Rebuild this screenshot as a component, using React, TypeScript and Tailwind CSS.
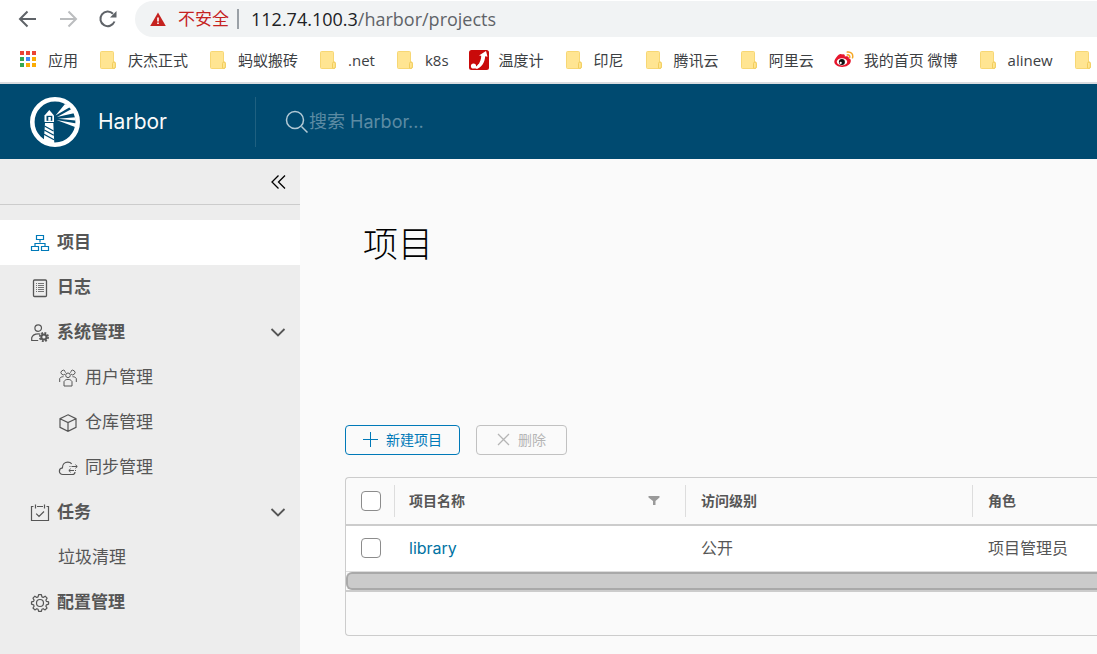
import type { ReactNode } from "react";

type IconName =
  | "projects"
  | "logs"
  | "admin"
  | "users"
  | "registry"
  | "replication"
  | "tasks"
  | "settings";

interface NavItem {
  title: string;
  icon?: IconName;
  child?: boolean;
  active?: boolean;
  expandable?: boolean;
}

const bookmarks = [
  { title: "应用", icon: "apps" },
  { title: "庆杰正式", icon: "folder" },
  { title: "蚂蚁搬砖", icon: "folder" },
  { title: ".net", icon: "folder" },
  { title: "k8s", icon: "folder" },
  { title: "温度计", icon: "thermo" },
  { title: "印尼", icon: "folder" },
  { title: "腾讯云", icon: "folder" },
  { title: "阿里云", icon: "folder" },
  { title: "我的首页 微博", icon: "weibo" },
  { title: "alinew", icon: "folder" },
  { title: "", icon: "folder" },
];

const navItems: NavItem[] = [
  { title: "项目", icon: "projects", active: true },
  { title: "日志", icon: "logs" },
  { title: "系统管理", icon: "admin", expandable: true },
  { title: "用户管理", icon: "users", child: true },
  { title: "仓库管理", icon: "registry", child: true },
  { title: "同步管理", icon: "replication", child: true },
  { title: "任务", icon: "tasks", expandable: true },
  { title: "垃圾清理", child: true },
  { title: "配置管理", icon: "settings" },
];

const projects = [{ name: "library", access: "公开", role: "项目管理员" }];

function BookmarkIcon({ icon }: { icon: string }) {
  if (icon === "apps") {
    const colors = [
      "#ea4335", "#ea4335", "#ea4335",
      "#34a853", "#4285f4", "#fbac05",
      "#34a853", "#fbac05", "#fbac05",
    ];
    return (
      <svg width="20" height="20" viewBox="0 0 20 20" className="shrink-0">
        {colors.map((color, i) => (
          <rect
            key={i}
            x={2 + (i % 3) * 6}
            y={1 + Math.floor(i / 3) * 6}
            width="4"
            height="4"
            fill={color}
          />
        ))}
      </svg>
    );
  }
  if (icon === "thermo") {
    return (
      <svg width="20" height="20" viewBox="0 0 20 20" className="shrink-0">
        <rect width="20" height="20" rx="2.5" fill="#c90a0a" />
        <path
          d="M17 1 10 5.500l2.200.3c.2 3-1.400 7.200-3.400 9.500l-1.300 3.400c5-.8 8.300-6 8.700-12.400l2.300.5z"
          fill="#fff"
        />
        <path d="M9.500 14c-1 1.600-2.300 2.500-3.600 2.800l.6 2c1.700.1 3.300-.9 4.500-2.300z" fill="#fff" />
        <circle cx="4.500" cy="16" r="2.600" fill="#fff" />
      </svg>
    );
  }
  if (icon === "weibo") {
    return (
      <svg width="20" height="20" viewBox="0 0 20 20" className="shrink-0">
        <path
          d="M8 4.500c1.600-.8 3.300-.3 2.800 2.100 2.700-.9 4.500-.2 3.900 1.700 2 .6 2.400 1.800 2 3.400-.8 3.300-4.700 5.300-8.700 5.200C3.500 16.800.3 14.600.3 11.800.3 9 5 3.400 7 4.100c.5.1.8.3 1 .4z"
          fill="#e6162d"
        />
        <ellipse cx="8" cy="11.800" rx="5.200" ry="3.600" fill="#fff" />
        <circle cx="7.900" cy="12" r="3" fill="#111" />
        <circle cx="6.700" cy="12.900" r="1.100" fill="#fff" />
        <path
          d="M13.300 2c3.500-.6 6.300 2.200 5.200 5.800M13.300 4.900c1.700-.3 2.900 1 2.400 2.600"
          fill="none"
          stroke="#f5a623"
          strokeWidth="1.500"
          strokeLinecap="round"
        />
      </svg>
    );
  }
  return (
    <svg width="20" height="20" viewBox="0 0 20 20" className="shrink-0">
      <path
        d="M3.500 1.500h11a1 1 0 0 1 1 1v9.500h.8a1 1 0 0 1 1 1v4a1.500 1.500 0 0 1-1.500 1.500H3.500a1 1 0 0 1-1-1v-15a1 1 0 0 1 1-1z"
        fill="#ffe592"
        stroke="#f7d774"
      />
      <path
        d="M14.500 18v-4.500a1.400 1.400 0 0 1 2.800 0V17a1.400 1.400 0 0 1-1.400 1.400z"
        fill="#ffe592"
        stroke="#f2cd5c"
      />
    </svg>
  );
}

const navIcons: Record<IconName, ReactNode> = {
  projects: (
    <path
      d="M5.500 1.500h7v4h-7zM.5 12.500h7v4h-7zM10.500 12.500h7v4h-7zM9 5.500v3M4 12.500v-3h10v3"
      strokeWidth="1.200"
    />
  ),
  logs: (
    <>
      <rect x="2.500" y="1" width="13" height="16.500" rx="1" strokeWidth="1.300" />
      <path
        d="M5 4.500h1M7 4.500h6M5 6.500h1M7 6.500h6M5 8.500h1M7 8.500h6M5 10.500h1M7 10.500h6M5 12.500h1M7 12.500h6"
        strokeWidth=".8"
      />
    </>
  ),
  admin: (
    <>
      <circle cx="7.200" cy="4.100" r="3.300" strokeWidth="1.200" />
      <path d="M7.200 16.500H.7v-2.700c.8-2.600 3.400-4 6.500-4 .8 0 1.500.1 2.100.3" strokeWidth="1.200" />
      <circle cx="12.900" cy="13" r="2.600" strokeWidth="2" />
      <circle cx="12.900" cy="13" r="4.200" strokeWidth="1.700" strokeDasharray="1.900 1.400" />
    </>
  ),
  users: (
    <>
      <circle cx="9" cy="6.300" r="2.300" />
      <path d="M5 17V12.600c.8-1.600 2.300-2.200 4-2.200s3.200.6 4 2.200V17zM5.900 5.200A2.300 2.300 0 1 1 6 2M12.100 5.200A2.300 2.300 0 1 0 12 2M.7 13V9.500C1.300 8.300 2.700 7.700 4.500 7.700M17.300 13V9.500c-.6-1.200-2-1.800-3.800-1.800M5.500 2.200l1.600 1.500M12.500 2.200l-1.600 1.500" />
    </>
  ),
  registry: (
    <path
      d="M9 .8 17 4.600v8.700l-8 4-8-4V4.600zM1 4.800l8 3.800 8-3.800M9 8.600v8.700"
      strokeWidth="1.200"
    />
  ),
  replication: (
    <>
      <path
        d="M16 13c0 1.700-1.200 2.500-2.800 2.500H3.800C1.900 15.500.4 14.200.4 12.200c0-1.800 1.200-3.100 3-3.300C3.400 5.500 5.700 3.200 8.800 3.200c1.600 0 3 .6 3.900 1.600"
        strokeWidth="1.200"
      />
      <path d="M10.500 7.500h1M12.500 7.500H18M16.400 5.700 18.300 7.500l-1.900 1.800M17 11.500h-1M15 11.500h-5M11.700 9.700 9.800 11.500l1.900 1.800" />
    </>
  ),
  tasks: (
    <path
      d="M2.500 2.500h-2v14h17v-14h-2M6 2.500h6M4.500.5v4M13.500.5v4M5.200 9.700 8 12.500l5-5"
      strokeWidth="1.200"
    />
  ),
  settings: (
    <>
      <circle cx="9" cy="9" r="3.500" strokeWidth="1.200" />
      <path
        d="M7.600.7h2.800l.5 2.200 1.300.5 1.900-1.200 2 2-1.200 1.900.5 1.300 2.200.5v2.300l-2.200.6-.5 1.300 1.100 1.900-1.900 1.900-1.900-1.200-1.300.6-.5 2.100H7.600l-.5-2.100-1.300-.6-1.900 1.200L2 14l1.100-1.900-.5-1.300-2.100-.6V7.900l2.100-.5.5-1.300L2 4.200l1.900-2 1.900 1.200 1.300-.5z"
        strokeWidth="1.200"
        strokeLinejoin="round"
      />
    </>
  ),
};

function NavIcon({ name }: { name: IconName }) {
  return (
    <svg
      width="18"
      height="18"
      viewBox="0 0 18 18"
      fill="none"
      stroke="currentColor"
      className="shrink-0 overflow-visible"
    >
      {navIcons[name]}
    </svg>
  );
}

function HarborLogo() {
  return (
    <svg width="50" height="50" viewBox="0 0 50 50">
      <circle cx="25" cy="25" r="22.700" fill="none" stroke="#fff" strokeWidth="4.600" />
      <path
        d="M25.500 18.500 35 7l6 2.500zM27 20l15.500-8.500L45 16zM28 21.700l17.500-1.500v3.300zM26.500 23l20 3.500L45 30z"
        fill="#fff"
      />
      <path d="M14.500 18.500 19.300 13l4.700 5.500V25h-9.500z" fill="#fff" />
      <path d="M16.500 18.800h5.800v5h-5.800z" fill="#004a70" />
      <path d="M18.300 20h2.500v3.800h-2.500z" fill="#fff" />
      <path d="M15 26h8.300l1 20.500-10.500-2.300z" fill="#fff" />
      <path
        d="m14.500 29 9 5M14.300 33l9.500 5.300M14 37.300l10 5.500"
        stroke="#004a70"
        strokeWidth="1.300"
      />
    </svg>
  );
}

function BrowserBar() {
  return (
    <div className="border-b-2 border-[#dadce0] bg-white font-['Open_Sans','Noto_Sans_CJK_SC',sans-serif]">
      <div className="flex h-[38px] items-center pl-[18px]">
        <div className="flex w-[117px] shrink-0 gap-5 text-[#5f6368]">
          <button aria-label="后退">
            <svg width="20" height="20" viewBox="0 0 20 20" fill="none" stroke="currentColor" strokeWidth="2">
              <path d="M18 10H3M9.500 2.500 2 10l7.500 7.500" />
            </svg>
          </button>
          <button aria-label="前进" className="text-[#bbbdbf]">
            <svg width="20" height="20" viewBox="0 0 20 20" fill="none" stroke="currentColor" strokeWidth="2">
              <path d="M2 10h15M10.500 2.500 18 10l-7.500 7.500" />
            </svg>
          </button>
          <button aria-label="重新加载">
            <svg width="20" height="20" viewBox="0 0 20 20" fill="none" stroke="currentColor" strokeWidth="2">
              <path d="M16.500 12.500A7.300 7.300 0 1 1 15 4.800" />
              <path d="M18.500 2v6.500H12z" fill="currentColor" stroke="none" />
            </svg>
          </button>
        </div>
        <div className="flex h-9 min-w-0 flex-1 items-center rounded-l-full bg-[#f1f3f4] pl-[15px]">
          <svg width="16" height="16" viewBox="0 0 16 16" className="shrink-0">
            <path d="M8 1.500 15.800 15H.2z" fill="#c5221f" />
            <path d="M7.200 6.500h1.600v4H7.200zM7.200 11.500h1.600V13H7.200z" fill="#fff" />
          </svg>
          <span className="ml-3 shrink-0 text-[17px] text-[#c5221f]">不安全</span>
          <span className="ml-2 h-5 w-0.5 shrink-0 bg-[#9aa0a6]" />
          <span className="ml-3 text-[18px] whitespace-nowrap text-[#5f6368]">
            <span className="text-[#202124]">112.74.100.3</span>/harbor/projects
          </span>
        </div>
      </div>
      <nav className="flex h-11 items-center gap-5 overflow-hidden pl-[18px] text-[15px] text-[#3c4043]">
        {bookmarks.map((bookmark, i) => (
          <a key={i} href="#" className="flex shrink-0 items-center gap-2.5 whitespace-nowrap">
            <BookmarkIcon icon={bookmark.icon} />
            {bookmark.title}
          </a>
        ))}
      </nav>
    </div>
  );
}

function Header() {
  return (
    <header className="flex h-[75px] items-center bg-[#004a70] text-[#fafafa]">
      <a href="#" className="flex h-[50px] w-[256px] shrink-0 items-center gap-[18px] border-r border-[#1f6080] pl-[30px]">
        <HarborLogo />
        <span className="text-[21px]">Harbor</span>
      </a>
      <label className="flex flex-1 items-center pl-[29px]">
        <svg width="24" height="24" viewBox="0 0 24 24" fill="none" stroke="#b3cad6" strokeWidth="1.500" className="shrink-0">
          <circle cx="10" cy="10" r="8.500" />
          <path d="m16.500 16.500 6 6" />
        </svg>
        <input
          type="search"
          aria-label="搜索"
          placeholder="搜索 Harbor..."
          className="min-w-0 flex-1 bg-transparent text-[18px] outline-none placeholder:text-[#5c8ba3]"
        />
      </label>
    </header>
  );
}

function Sidebar() {
  return (
    <aside className="w-[300px] shrink-0 bg-[#ededed] text-[#565656]">
      <div className="flex h-[46px] items-center justify-end border-b border-[#ccc] pr-3">
        <button aria-label="收起" className="text-black">
          <svg width="20" height="20" viewBox="0 0 20 20" fill="none" stroke="currentColor" strokeWidth="1.300">
            <path d="M10.500 3.500 4 10l6.500 6.500M17 3.500 10.500 10l6.500 6.500" />
          </svg>
        </button>
      </div>
      <nav className="pt-[15px]">
        {navItems.map((item) => (
          <a
            key={item.title}
            href="#"
            className={
              (item.active ? "bg-white " : "") +
              (item.child && item.icon ? "pl-[59px] " : item.child ? "pl-[58px] " : "pl-[31px] ") +
              (item.child ? "" : "font-bold ") +
              "flex h-[45px] items-center gap-2 pr-3 text-[17px]"
            }
          >
            {item.icon && (
              <span className={item.active ? "text-[#0079b8]" : ""}>
                <NavIcon name={item.icon} />
              </span>
            )}
            <span className="flex-1">{item.title}</span>
            {item.expandable && (
              <svg width="20" height="20" viewBox="0 0 20 20" fill="none" stroke="currentColor" strokeWidth="1.800">
                <path d="m3.500 6 6.500 6.500L16.500 6" />
              </svg>
            )}
          </a>
        ))}
      </nav>
    </aside>
  );
}

function Checkbox({ label }: { label: string }) {
  return (
    <input
      type="checkbox"
      aria-label={label}
      className="block size-5 appearance-none rounded border border-[#8c8c8c] bg-white checked:bg-[#0079b8]"
    />
  );
}

function ProjectGrid() {
  return (
    <div className="mt-[22px] rounded-l border border-r-0 border-[#ccc]">
      <table className="w-full table-fixed border-collapse text-left text-[#565656]">
        <colgroup>
          <col className="w-12" />
          <col className="w-[291px]" />
          <col className="w-[287px]" />
          <col />
        </colgroup>
        <thead>
          <tr className="h-[47px] border-b-2 border-[#ccc] text-[14px]">
            <th className="pl-[15px]">
              <Checkbox label="全选" />
            </th>
            <th>
              <div className="flex h-8 items-center justify-between border-l border-[#ddd] pr-[25px] pb-0.5 pl-3.5">
                项目名称
                <button aria-label="筛选">
                  <svg width="12" height="12" viewBox="0 0 12 12" fill="#9a9a9a">
                    <path d="M.5 2h11v1.500L7.500 7v4H5V7L.5 3.500z" />
                  </svg>
                </button>
              </div>
            </th>
            <th>
              <div className="flex h-8 items-center border-l border-[#ddd] pb-0.5 pl-[15px]">访问级别</div>
            </th>
            <th>
              <div className="flex h-8 items-center border-l border-[#ddd] pb-0.5 pl-[15px]">角色</div>
            </th>
          </tr>
        </thead>
        <tbody>
          {projects.map((project) => (
            <tr key={project.name} className="h-[46px] border-b border-[#ddd] bg-white text-[16px]">
              <td className="pl-[15px]">
                <Checkbox label={project.name} />
              </td>
              <td className="pl-[15px]">
                <a href="#" className="text-[#0072a3]">
                  {project.name}
                </a>
              </td>
              <td className="pl-4">{project.access}</td>
              <td className="pl-4">{project.role}</td>
            </tr>
          ))}
        </tbody>
      </table>
      <div className="border-b-2 border-[#ccc]">
        <div className="h-[18px] rounded-l-md border-2 border-r-0 border-[#a9a9a9] bg-[#cbcbcb]" />
      </div>
      <div className="h-[43px]" />
    </div>
  );
}

export default function App() {
  return (
    <div className="flex min-h-screen flex-col overflow-hidden font-['Inter','Noto_Sans_CJK_SC',sans-serif]">
      <BrowserBar />
      <Header />
      <div className="flex flex-1">
        <Sidebar />
        <main className="min-w-0 flex-1 bg-[#fafafa] pt-[61px] pl-[45px]">
          <h1 className="pl-[18px] text-[35px] leading-12 font-light text-black">项目</h1>
          <div className="mt-[157px] flex gap-4 text-[14px]">
            <button className="flex h-[30px] items-center gap-2 rounded-[4px] border border-[#0079b8] px-[17px] pb-0.5 text-[#0079b8]">
              <svg width="15" height="15" viewBox="0 0 15 15" stroke="currentColor">
                <path d="M0 7.500h15M7.500 0v15" />
              </svg>
              新建项目
            </button>
            <button
              disabled
              className="flex h-[30px] items-center gap-2 rounded-[4px] border border-[#c1c1c1] px-5 pb-0.5 text-[#b5b5b5]"
            >
              <svg width="13" height="13" viewBox="0 0 13 13" stroke="currentColor" strokeWidth="1.300">
                <path d="m1 1 11 11M12 1 1 12" />
              </svg>
              删除
            </button>
          </div>
          <ProjectGrid />
        </main>
      </div>
    </div>
  );
}
